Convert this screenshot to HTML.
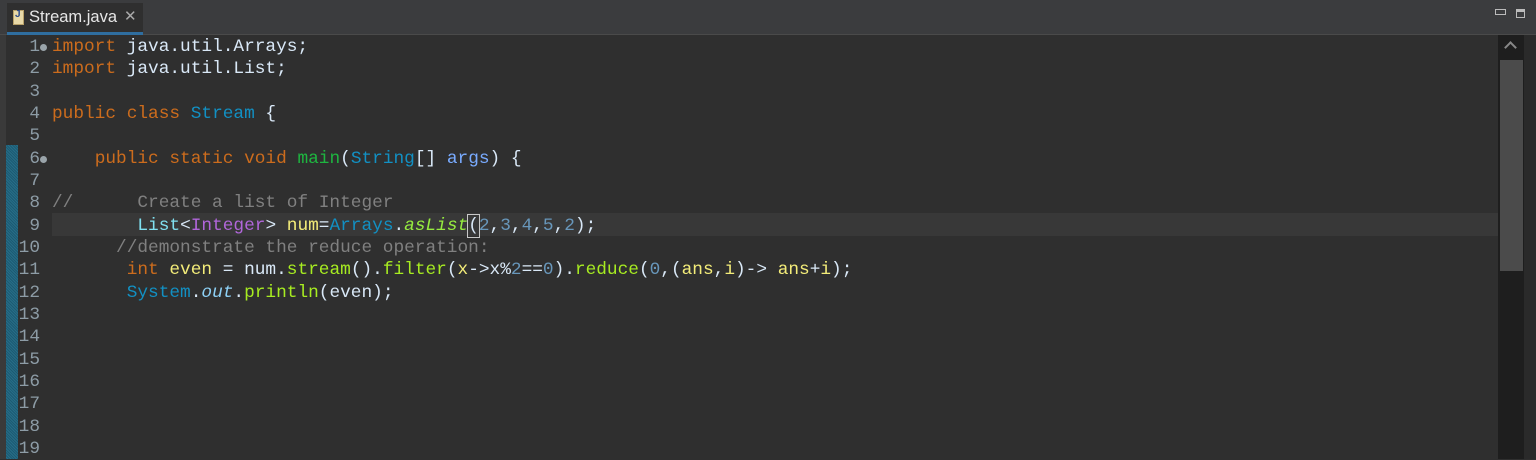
<!DOCTYPE html>
<html><head><style>
body{margin:0;width:1536px;height:459px;background:#2f2f2f;overflow:hidden;position:relative;font-family:"Liberation Sans",sans-serif}
.tabbar{position:absolute;left:0;top:0;width:1536px;height:35px;background:#3b3c3e;border-bottom:1px solid #4a4a4a;box-sizing:border-box}
.tab{position:absolute;left:7px;top:3px;width:136px;height:29px;background:#2f2f2f;border-bottom:3px solid #2f6ea0}
.tab .ic{position:absolute;left:6px;top:7px;width:9px;height:13px;background:#e8d9a8;border:1px solid #b9a26a}
.tab .ic:after{content:"J";position:absolute;left:1px;top:-2px;font-size:10px;font-weight:bold;color:#2b4a8a}
.tab .t{position:absolute;left:22px;top:5px;font-size:16.5px;color:#e6e6e6}
.tab .x{position:absolute;left:117px;top:4px;font-size:15px;color:#aaa}
.leftbar{position:absolute;left:0;top:35px;width:6px;height:424px;background:#3a3a3a}
.blue{position:absolute;left:6px;top:145px;width:12px;height:314px;background:repeating-linear-gradient(45deg,#1d5a72 0 1px,#266e88 1px 2px)}
.code{position:absolute;left:0;top:36px;font-family:"Liberation Mono",monospace;font-size:17.8px;color:#d9e8f7}
.ln{height:22.33px;line-height:22.33px;white-space:pre;position:relative}
.n{position:absolute;left:18px;width:22px;text-align:right;color:#8d9ca6}
.c{position:absolute;left:52px}
.hl{position:absolute;left:52px;top:213px;width:1446px;height:23px;background:#383838}
.dot{position:absolute;left:40px;top:8px;width:7px;height:7px;border-radius:50%;background:#9aa4aa}
.k{color:#cc6c1d}.cl{color:#1290c3}.m{color:#1eb540}.a{color:#79abff}.cm{color:#808080}
.li{color:#80e0f0}.pu{color:#b166da}.y{color:#f3ec79}.it{font-style:italic}.g{color:#96ec3f}.nu{color:#6897bb}.f{color:#a7ec21}.o{color:#8dd0f5}
.sb{position:absolute;left:1498px;top:35px;width:26px;height:424px;background:#1e1e1e}
.th{position:absolute;left:1500px;top:60px;width:23px;height:211px;background:#4b4b4b}
.rr{position:absolute;left:1524px;top:35px;width:12px;height:424px;background:#2a2a2a}
.cur{display:inline-block;outline:1px solid #c8c8c8}
</style></head><body>
<div class="tabbar">
<div class="tab"><div class="ic"></div><div class="t">Stream.java</div><div class="x">✕</div></div>
<div style="position:absolute;left:1495px;top:9px;width:9px;height:4px;border:1px solid #bbb"></div>
<div style="position:absolute;left:1516px;top:9px;width:9px;height:9px;border:1px solid #bbb;border-top:3px solid #bbb;box-sizing:border-box"></div>
</div>
<div class="leftbar"></div>
<div class="blue"></div>
<div class="hl"></div>
<div class="sb"><div style="position:absolute;left:8px;top:8px;width:7px;height:7px;border-left:2px solid #888;border-top:2px solid #888;transform:rotate(45deg)"></div></div>
<div class="th"></div>
<div class="rr"></div>
<div class="code">
<div class="ln"><span class="n">1</span><span class="dot"></span><span class="c"><span class="k">import</span> java.util.Arrays;</span></div>
<div class="ln"><span class="n">2</span><span class="c"><span class="k">import</span> java.util.List;</span></div>
<div class="ln"><span class="n">3</span></div>
<div class="ln"><span class="n">4</span><span class="c"><span class="k">public</span> <span class="k">class</span> <span class="cl">Stream</span> {</span></div>
<div class="ln"><span class="n">5</span></div>
<div class="ln"><span class="n">6</span><span class="dot"></span><span class="c">    <span class="k">public</span> <span class="k">static</span> <span class="k">void</span> <span class="m">main</span>(<span class="cl">String</span>[] <span class="a">args</span>) {</span></div>
<div class="ln"><span class="n">7</span></div>
<div class="ln"><span class="n">8</span><span class="c"><span class="cm">//      Create a list of Integer</span></span></div>
<div class="ln"><span class="n">9</span><span class="c">        <span class="li">List</span>&lt;<span class="pu">Integer</span>&gt; <span class="y">num</span>=<span class="cl">Arrays</span>.<span class="g it">asList</span><span class="cur">(</span><span class="nu">2</span>,<span class="nu">3</span>,<span class="nu">4</span>,<span class="nu">5</span>,<span class="nu">2</span>);</span></div>
<div class="ln"><span class="n">10</span><span class="c"><span class="cm">      //demonstrate the reduce operation:</span></span></div>
<div class="ln"><span class="n">11</span><span class="c">       <span class="k">int</span> <span class="y">even</span> = num.<span class="f">stream</span>().<span class="f">filter</span>(<span class="y">x</span>-&gt;x%<span class="nu">2</span>==<span class="nu">0</span>).<span class="f">reduce</span>(<span class="nu">0</span>,(<span class="y">ans</span>,<span class="y">i</span>)-&gt; <span class="y">ans</span>+<span class="y">i</span>);</span></div>
<div class="ln"><span class="n">12</span><span class="c">       <span class="cl">System</span>.<span class="o it">out</span>.<span class="f">println</span>(even);</span></div>
<div class="ln"><span class="n">13</span></div>
<div class="ln"><span class="n">14</span></div>
<div class="ln"><span class="n">15</span></div>
<div class="ln"><span class="n">16</span></div>
<div class="ln"><span class="n">17</span></div>
<div class="ln"><span class="n">18</span></div>
<div class="ln"><span class="n">19</span></div>
</div>
</body></html>
